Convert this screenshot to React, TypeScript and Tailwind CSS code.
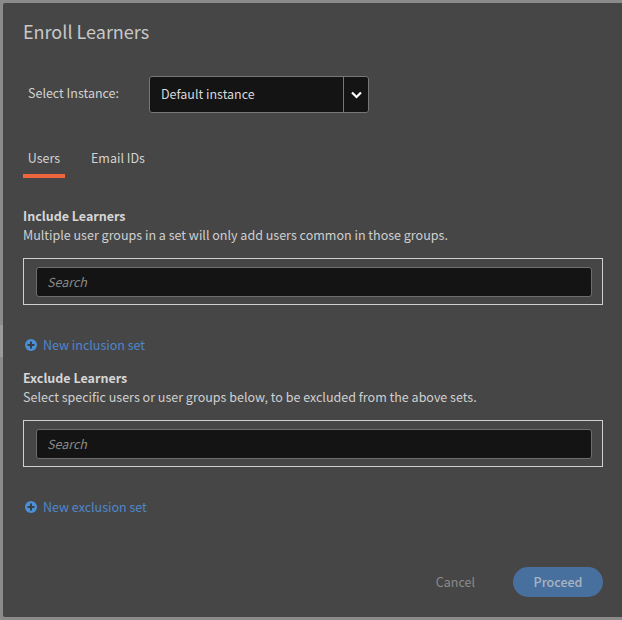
import React from "react";

const font = { fontFamily: '"Noto Sans CJK SC", "Noto Sans", sans-serif' };

function PlusCircle() {
  return (
    <svg width="12" height="12" viewBox="0 0 12 12" className="shrink-0">
      <circle cx="6" cy="6" r="6" fill="#4b8fd6" />
      <rect x="2.5" y="5" width="7" height="2" fill="#3a3f46" />
      <rect x="5" y="2.5" width="2" height="7" fill="#3a3f46" />
    </svg>
  );
}

function SearchBox() {
  return (
    <div className="mt-[14px] border border-[#d0d0d0] h-[47px] pl-[12px] pr-[10px] flex items-center">
      <div className="w-full h-[30px] bg-[#141414] border border-[#6e6e6e] rounded-[3px] pl-[10px] pt-[1px] flex items-center text-[12.5px] italic text-[#8a8a8a]">
        Search
      </div>
    </div>
  );
}

function Section({ title, desc }: { title: string; desc: string }) {
  return (
    <div>
      <div className="text-[12.5px] leading-[19px] font-bold text-[#d6d6d6]">{title}</div>
      <div className="text-[12.53px] leading-[19px] text-[#cfcfcf]">{desc}</div>
    </div>
  );
}

function AddLink({ label }: { label: string }) {
  return (
    <div className="flex items-center gap-[6px] pl-[2px] text-[12.5px] leading-[20px] text-[#4f86cb]">
      <PlusCircle />
      <span>{label}</span>
    </div>
  );
}

export default function App() {
  return (
    <div className="relative w-[622px] h-[620px] bg-[#8b8b8b] pl-[3px] pt-[3px] pb-[3px] overflow-hidden" style={font}>
      <div className="absolute left-0 top-[325px] w-[3px] h-[32px] bg-[#9b9b9b]" />
      <div className="h-full bg-[#464646] rounded-l-[2px] pl-[20px] pr-[19px] flex flex-col relative">
        <div className="mt-[15px] text-[18px] leading-[26px] text-[#c8c8c8]">Enroll Learners</div>

        <div className="mt-[32px] flex items-center">
          <div className="w-[126px] pl-[5px] pb-[2px] text-[12.5px] text-[#d2d2d2]">Select Instance:</div>
          <div className="w-[220px] h-[37px] bg-[#141414] border border-[#777777] rounded-[3px] flex items-center">
            <div className="flex-1 pl-[11px] text-[12.5px] text-[#d8d8d8]">Default instance</div>
            <div className="w-[25px] h-full border-l border-[#777777] flex items-center justify-center">
              <svg width="11" height="8" viewBox="0 0 11 8" fill="none" stroke="#ffffff" strokeWidth="2.2">
                <path d="M1 1.5 5.5 6 10 1.5" />
              </svg>
            </div>
          </div>
        </div>

        <div className="mt-[35px] flex text-[12.5px] leading-[20px] text-[#d2d2d2]">
          <div className="w-[42px] text-center h-[30px] border-b-[4px] border-[#f0673f]">Users</div>
          <div className="ml-[26px]">Email IDs</div>
        </div>

        <div className="mt-[28px]">
          <Section title="Include Learners" desc="Multiple user groups in a set will only add users common in those groups." />
          <SearchBox />
        </div>

        <div className="mt-[30px]">
          <AddLink label="New inclusion set" />
        </div>

        <div className="mt-[13px]">
          <Section title="Exclude Learners" desc="Select specific users or user groups below, to be excluded from the above sets." />
          <SearchBox />
        </div>

        <div className="mt-[30px]">
          <AddLink label="New exclusion set" />
        </div>

        <div className="mt-[50px] flex items-center justify-end">
          <span className="text-[12.5px] text-[#8c8c8c]">Cancel</span>
          <button className="ml-[38px] w-[90px] h-[30px] rounded-full bg-[#48709f] text-[12.5px] font-medium text-[#a9b4c2]">Proceed</button>
        </div>
      </div>
    </div>
  );
}
